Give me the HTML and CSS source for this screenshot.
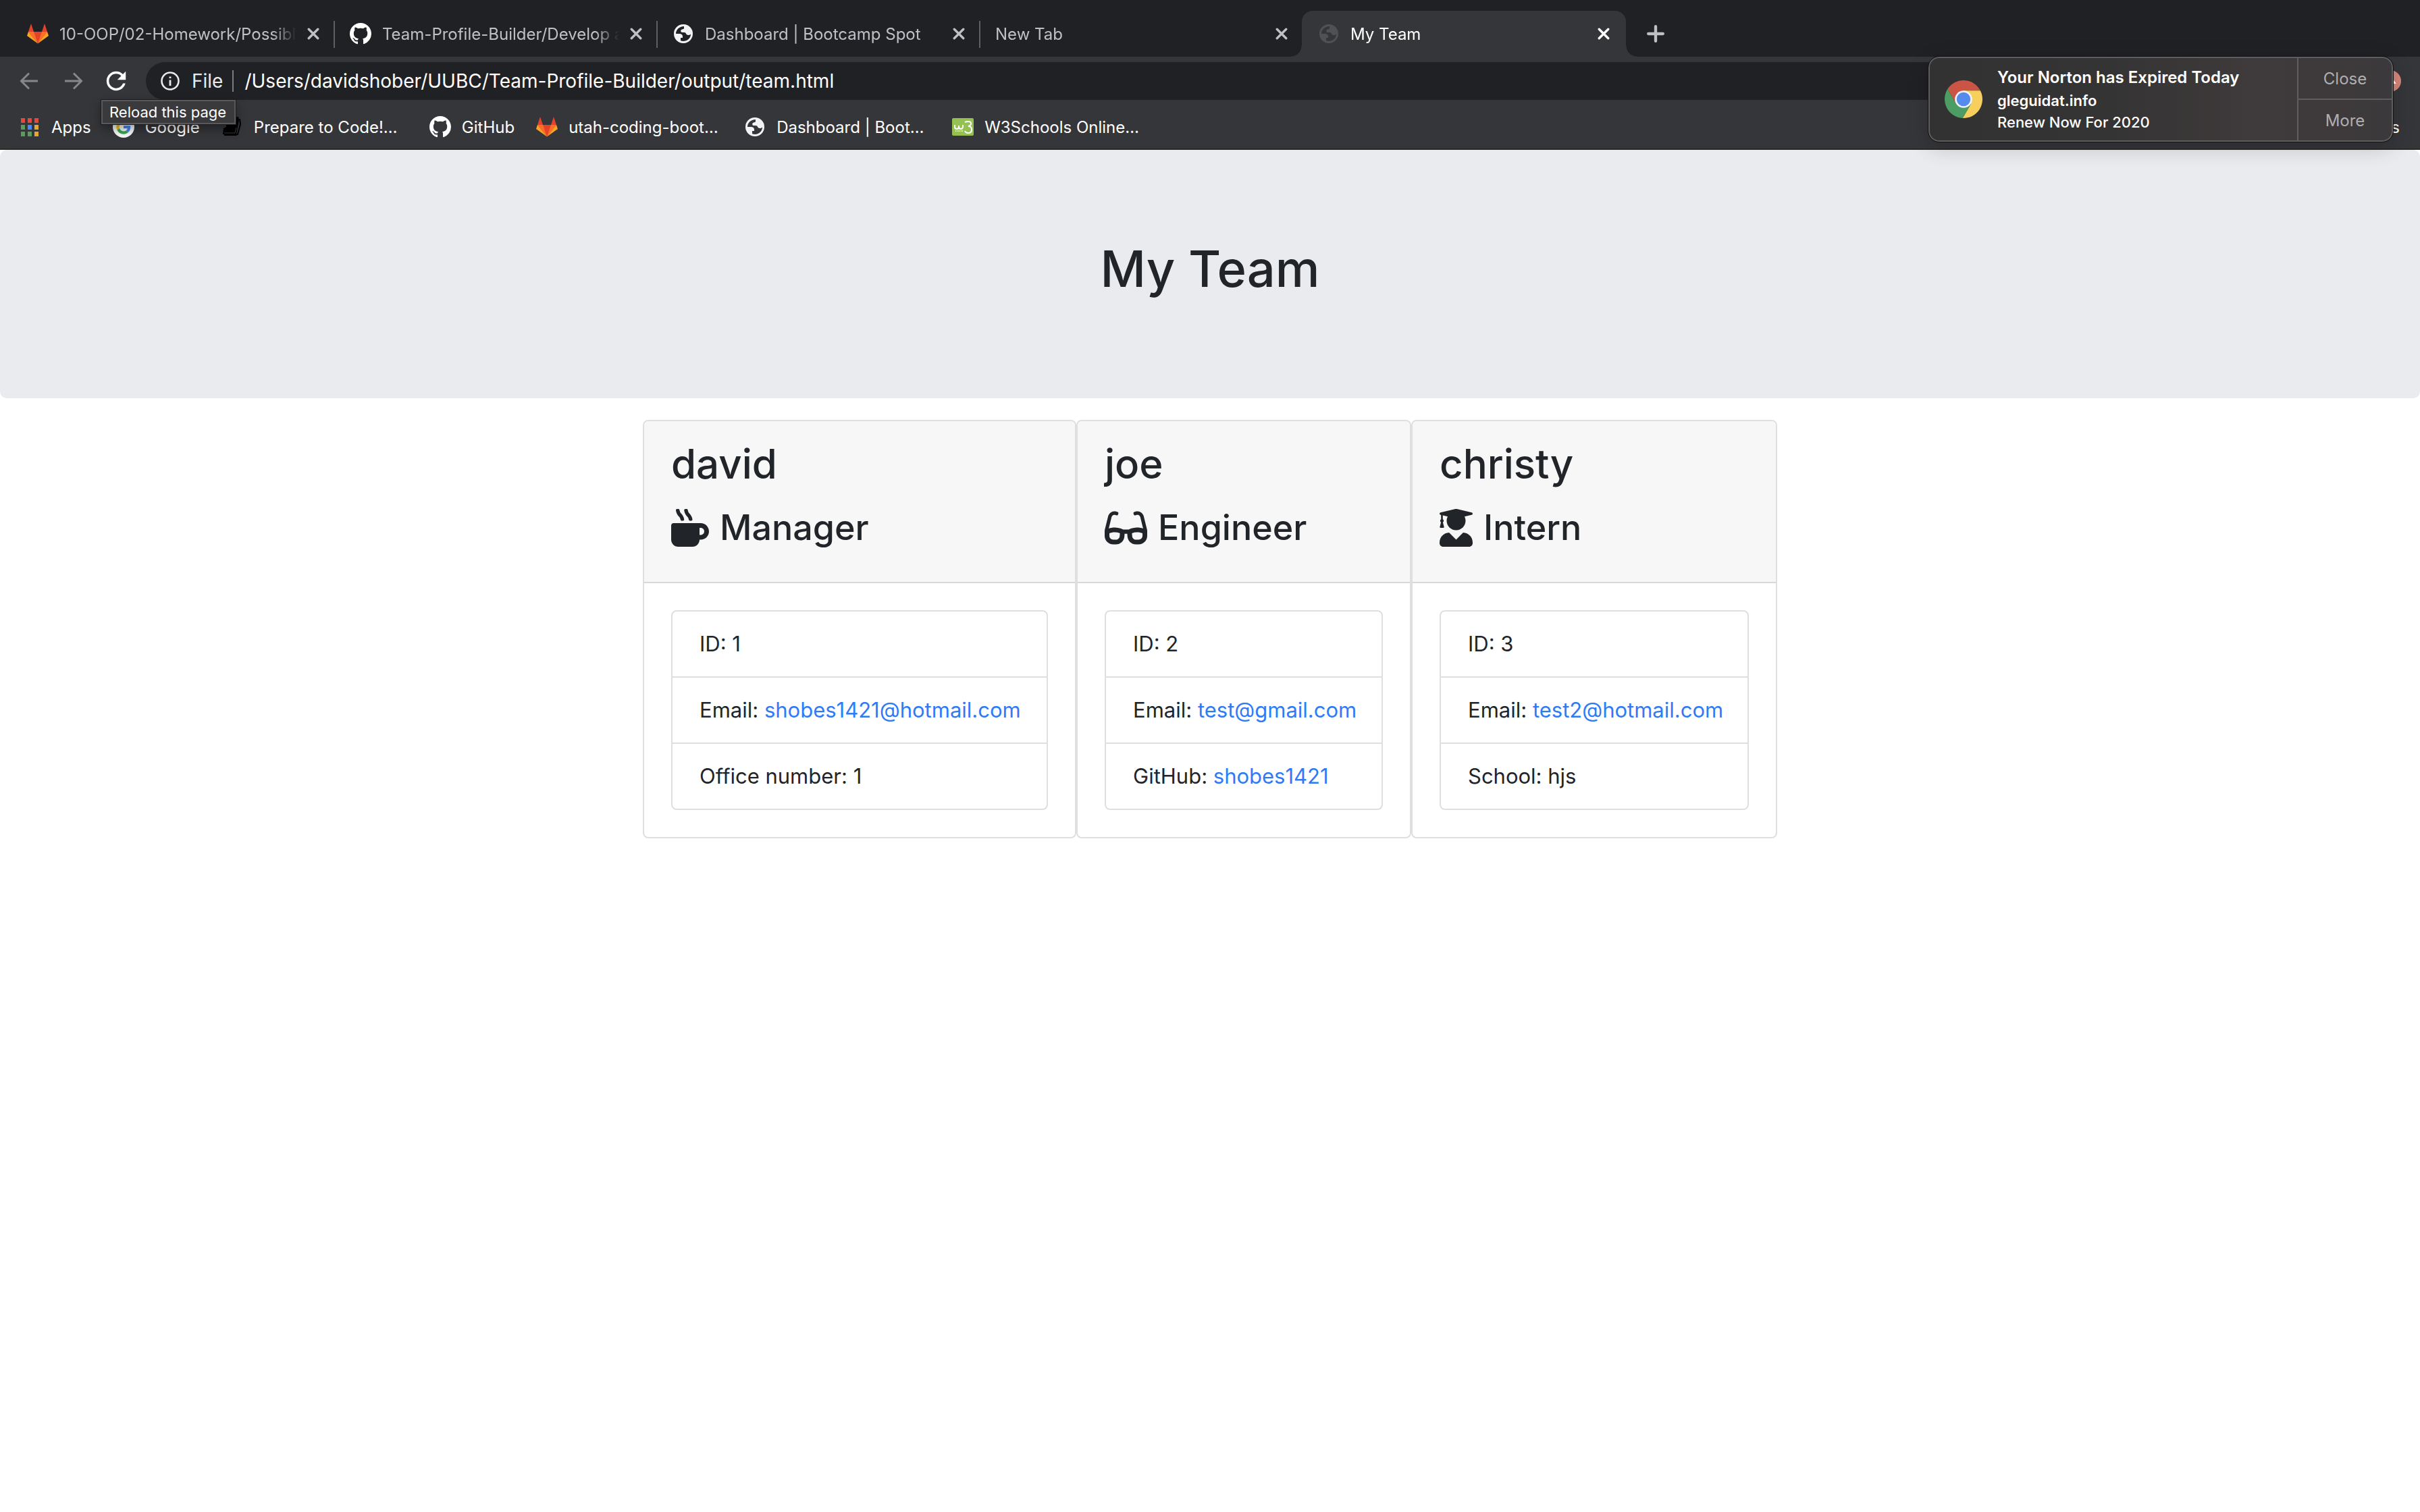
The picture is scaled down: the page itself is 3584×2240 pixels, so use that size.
FILE: index.html
```html
<!DOCTYPE html>
<html lang="en">
<head>
<meta charset="utf-8">
<title>My Team</title>
<link rel="stylesheet" href="styles.css">
</head>
<body>
<svg class="sprite" aria-hidden="true">
  <symbol id="gitlab" viewBox="0 0 32 32">
    <path fill="#e24329" d="M6 1 10 13H22L26 1 30 13 16 30.500 2 13Z"/>
    <path fill="#fc6d26" d="M2 13H10L16 30.500ZM30 13H22L16 30.500Z"/>
    <path fill="#fca326" d="M2 13 0 19 16 30.500ZM30 13 32 19 16 30.500Z"/>
  </symbol>
  <symbol id="github" viewBox="0 0 16 16">
    <path fill="#fff" d="M8 0C3.580 0 0 3.580 0 8c0 3.540 2.290 6.530 5.470 7.590.4.070.55-.17.55-.38 0-.19-.01-.82-.01-1.490-2.010.37-2.530-.49-2.690-.94-.09-.23-.48-.94-.82-1.130-.28-.15-.68-.52-.01-.53.630-.01 1.080.58 1.230.82.72 1.210 1.870.87 2.330.66.070-.52.28-.87.51-1.070-1.780-.2-3.640-.89-3.640-3.950 0-.87.31-1.590.82-2.150-.08-.2-.36-1.020.08-2.120 0 0 .67-.21 2.200.82.64-.18 1.320-.27 2-.27s1.360.09 2 .27c1.530-1.040 2.200-.82 2.200-.82.44 1.100.16 1.920.08 2.120.51.560.82 1.270.82 2.150 0 3.070-1.870 3.750-3.650 3.950.29.250.54.730.54 1.480 0 1.070-.01 1.930-.01 2.200 0 .21.15.46.55.38A8.010 8.010 0 0 0 16 8c0-4.420-3.580-8-8-8z"/>
  </symbol>
  <symbol id="globe" viewBox="-2 -2 32 32">
    <path fill="currentColor" fill-rule="evenodd" d="M14 0a14 14 0 1 0 0 28 14 14 0 0 0 0-28ZM15 3C8 3 3 8 3 14H8c3 0 5 1.500 5 4v2h-3v4.300C17 27 25 22 25 14.500c-3 2.500-6 1.500-7-.5-.5-2-2-2-5-2-3 0-3.500-2-2-4l4-1.500Z"/>
  </symbol>
  <symbol id="close" viewBox="0 0 16 16">
    <path d="M2 2 14 14M14 2 2 14" stroke="currentColor" stroke-width="3" stroke-linecap="round"/>
  </symbol>
</svg>

<header class="browser">
  <nav class="tabs" aria-label="Tabs">
    <div class="tab">
      <svg class="favicon"><use href="#gitlab"/></svg>
      <span class="tab-title">10-OOP/02-Homework/Possible</span>
      <button class="tab-close" aria-label="Close tab"><svg><use href="#close"/></svg></button>
    </div>
    <div class="tab">
      <svg class="favicon"><use href="#github"/></svg>
      <span class="tab-title">Team-Profile-Builder/Develop at</span>
      <button class="tab-close" aria-label="Close tab"><svg><use href="#close"/></svg></button>
    </div>
    <div class="tab">
      <svg class="favicon globe"><use href="#globe"/></svg>
      <span class="tab-title">Dashboard | Bootcamp Spot</span>
      <button class="tab-close" aria-label="Close tab"><svg><use href="#close"/></svg></button>
    </div>
    <div class="tab last">
      <span class="tab-title">New Tab</span>
      <button class="tab-close" aria-label="Close tab"><svg><use href="#close"/></svg></button>
    </div>
    <div class="tab active">
      <svg class="favicon globe dim"><use href="#globe"/></svg>
      <span class="tab-title">My Team</span>
      <button class="tab-close" aria-label="Close tab"><svg><use href="#close"/></svg></button>
    </div>
    <button class="new-tab" aria-label="New tab">
      <svg viewBox="0 0 24 24"><path d="M12 2V22M2 12H22" stroke="currentColor" stroke-width="4" stroke-linecap="round"/></svg>
    </button>
  </nav>

  <div class="toolbar">
    <button class="tool off" aria-label="Back"><svg viewBox="0 0 32 32"><path d="M28 16H4M15 4.500 3.500 16 15 27.500" fill="none" stroke="currentColor" stroke-width="3"/></svg></button>
    <button class="tool off" aria-label="Forward"><svg viewBox="0 0 32 32"><path d="M4 16H28M17 4.500 28.500 16 17 27.500" fill="none" stroke="currentColor" stroke-width="3"/></svg></button>
    <div class="reload">
      <button class="tool" aria-label="Reload"><svg viewBox="3 3 18 18"><path fill="currentColor" d="M17.650 6.350C16.200 4.900 14.210 4 12 4c-4.420 0-7.990 3.580-7.990 8s3.570 8 7.990 8c3.730 0 6.840-2.550 7.730-6h-2.080c-.82 2.330-3.040 4-5.650 4-3.310 0-6-2.690-6-6s2.690-6 6-6c1.660 0 3.140.69 4.220 1.780L13 11h7V4l-2.350 2.350z"/></svg></button>
      <span class="tooltip" role="tooltip">Reload this page</span>
    </div>
    <div class="omnibox">
      <svg class="info" viewBox="0 0 28 28"><circle cx="14" cy="14" r="12.500" fill="none" stroke="currentColor" stroke-width="2.600"/><path d="M14 12.500V21M14 7.500V10" stroke="currentColor" stroke-width="2.800"/></svg>
      <label class="scheme" for="url">File</label>
      <input class="url" id="url" type="text" value="/Users/davidshober/UUBC/Team-Profile-Builder/output/team.html">
    </div>
    <button class="avatar" aria-label="Profile"><svg viewBox="0 0 32 32"><path d="M16 8 25 20H7Z" fill="#fff"/></svg></button>
  </div>

  <nav class="bookmarks" aria-label="Bookmarks">
    <a class="bookmark" href="#">
      <svg class="favicon" viewBox="0 0 32 32"><path fill="#e5493d" d="M3 3h6v7H3zM13 3h6v7h-6zM23 3h6v7h-6z"/><path fill="#579e5b" d="M3 13h6v7H3zM3 23h6v7H3zM13 23h6v7h-6z"/><path fill="#4a8af4" d="M13 13h6v7h-6z"/><path fill="#e9a532" d="M23 13h6v7h-6zM23 23h6v7h-6z"/></svg>
      <span>Apps</span>
    </a>
    <a class="bookmark" href="#">
      <svg class="favicon" viewBox="0 0 72 72"><circle cx="36" cy="36" r="36" fill="#f8f8f8"/><g transform="translate(12 12)"><path fill="#ea4335" d="M24 9.500c3.540 0 6.710 1.220 9.210 3.600l6.850-6.850C35.900 2.380 30.470 0 24 0 14.620 0 6.510 5.380 2.560 13.220l7.980 6.190C12.430 13.720 17.740 9.500 24 9.500z"/><path fill="#4285f4" d="M46.980 24.550c0-1.570-.15-3.090-.38-4.550H24v9.020h12.940c-.58 2.960-2.260 5.480-4.780 7.180l7.730 6c4.510-4.180 7.090-10.360 7.090-17.650z"/><path fill="#fbbc05" d="M10.530 28.590c-.48-1.450-.76-2.990-.76-4.590s.27-3.140.76-4.590l-7.980-6.190C.92 16.460 0 20.120 0 24c0 3.880.92 7.540 2.560 10.780l7.970-6.190z"/><path fill="#34a853" d="M24 48c6.480 0 11.930-2.130 15.890-5.810l-7.730-6c-2.150 1.450-4.920 2.300-8.160 2.300-6.260 0-11.570-4.220-13.470-9.910l-7.980 6.190C6.510 42.620 14.620 48 24 48z"/></g></svg>
      <span>Google</span>
    </a>
    <a class="bookmark wide" href="#">
      <svg class="favicon" viewBox="0 0 32 32"><path d="M7 3 25 1 26 6 22 27H2L3 18 7 16Z"/><path d="M27 4 28 12 24 27 21 28H4" fill="none" stroke="#000" stroke-width="2"/><path d="M4 25H20L22 17" fill="none" stroke="#3a3b3e"/></svg>
      <span>Prepare to Code!…</span>
    </a>
    <a class="bookmark" href="#">
      <svg class="favicon"><use href="#github"/></svg>
      <span>GitHub</span>
    </a>
    <a class="bookmark wide" href="#">
      <svg class="favicon"><use href="#gitlab"/></svg>
      <span>utah-coding-boot…</span>
    </a>
    <a class="bookmark wide" href="#">
      <svg class="favicon globe"><use href="#globe"/></svg>
      <span>Dashboard | Boot…</span>
    </a>
    <a class="bookmark wide" href="#">
      <svg class="favicon" viewBox="0 0 32 32"><rect y="3" width="32" height="26" rx="2" fill="#95c152"/><path d="M4 13v3q0 3 3 3t3-3v-2 2q0 3 3 3t3-4v-2M19 9q2-1 5-1 4 0 4 3t-4 4q5 0 5 5t-5 5q-4 0-5-3" fill="none" stroke="#fff" stroke-width="2"/><path d="M5 22H17" stroke="#fff" stroke-width="2" stroke-dasharray="1 1"/></svg>
      <span>W3Schools Online…</span>
    </a>
    <a class="bookmark other" href="#" aria-label="Other Bookmarks"><span>s</span></a>
  </nav>

  <aside class="notice" aria-label="Notification">
    <svg class="chrome" viewBox="0 0 48 48"><path fill="#cc5444" d="M45.330 13H24V24L14.470 29.500 3.800 11.030A24 24 0 0 1 45.330 13"/><path fill="#f7cf5d" d="M45.330 13H24V24L33.530 29.500 22.870 47.970A24 24 0 0 0 45.330 13"/><path fill="#4c9d63" d="M3.800 11.030 14.470 29.500 24 24 33.530 29.500 22.870 47.970A24 24 0 0 1 3.800 11.030"/><circle cx="24" cy="24" r="11" fill="#f2f3f7"/><circle cx="24" cy="24" r="8.800" fill="#568bee"/></svg>
    <div class="notice-text">
      <strong>Your Norton has Expired Today</strong>
      <b>gleguidat.info</b>
      <span>Renew Now For 2020</span>
    </div>
    <div class="notice-actions">
      <button>Close</button>
      <button>More</button>
    </div>
  </aside>
</header>

<main class="page">
  <div class="jumbotron"><h1>My Team</h1></div>

  <div class="team">
    <section class="card">
      <div class="card-header">
        <h2>david</h2>
        <h3><svg viewBox="0 0 512 512"><path fill="currentColor" d="M127.100 146.500c1.300 7.700 8 13.500 16 13.500h16.500c9.800 0 17.600-8.500 16.300-18-3.800-28.200-16.400-54.200-36.600-74.700-14.400-14.700-23.600-33.300-26.400-53.500C111.800 5.900 105 0 96.800 0H80.400C70.600 0 63 8.500 64.100 18c3.900 31.900 18 61.300 40.600 84.400 12 12.200 19.700 27.500 22.400 44.100zm112 0c1.300 7.700 8 13.500 16 13.500h16.500c9.800 0 17.600-8.500 16.300-18-3.800-28.200-16.400-54.200-36.600-74.700-14.400-14.700-23.600-33.300-26.400-53.500C223.800 5.900 217 0 208.800 0h-16.400c-9.800 0-17.500 8.500-16.300 18 3.900 31.900 18 61.300 40.600 84.400 12 12.200 19.700 27.500 22.400 44.100zM400 192H32c-17.700 0-32 14.300-32 32v192c0 53 43 96 96 96h192c53 0 96-43 96-96h16c61.800 0 112-50.200 112-112s-50.200-112-112-112zm0 160h-16v-96h16c26.500 0 48 21.500 48 48s-21.500 48-48 48z"/></svg>Manager</h3>
      </div>
      <ul class="details">
        <li>ID: 1</li>
        <li>Email: <a href="mailto:shobes1421@hotmail.com">shobes1421@hotmail.com</a></li>
        <li>Office number: 1</li>
      </ul>
    </section>
    <section class="card">
      <div class="card-header">
        <h2>joe</h2>
        <h3><svg viewBox="0 0 576 512"><path fill="currentColor" d="M574.100 280.370L528.750 98.660c-5.910-23.700-21.590-44.050-43-55.810-21.440-11.730-46.970-14.110-70.190-6.330l-15.250 5.080c-8.390 2.790-12.920 11.860-10.120 20.240l5.060 15.180c2.790 8.380 11.850 12.910 20.230 10.120l13.180-4.390c10.870-3.620 23-3.570 33.160 1.730 10.290 5.370 17.570 14.560 20.370 25.820l38.460 153.820c-22.190-6.810-49.790-12.460-81.200-12.460-34.770 0-73.980 7.020-114.850 26.740h-73.180c-40.870-19.740-80.080-26.750-114.860-26.750-31.420 0-59.020 5.650-81.210 12.460l38.460-153.830c2.790-11.250 10.090-20.450 20.380-25.810 10.160-5.300 22.280-5.350 33.150-1.730l13.170 4.390c8.380 2.790 17.440-1.740 20.230-10.120l5.060-15.180c2.800-8.380-1.730-17.450-10.120-20.240l-15.250-5.080c-23.220-7.780-48.750-5.410-70.190 6.330-21.410 11.770-37.090 32.110-43 55.800L1.900 280.370A64.218 64.218 0 0 0 0 295.860v70.250C0 429.010 51.580 480 115.200 480h37.120c60.280 0 110.370-45.940 114.880-105.370l2.930-38.630h35.750l2.930 38.630C313.310 434.060 363.400 480 423.680 480h37.120c63.620 0 115.200-50.990 115.200-113.880v-70.250c0-5.230-.64-10.430-1.900-15.500zm-370.720 89.420c-1.970 25.910-24.400 46.210-51.060 46.210H115.200C86.970 416 64 393.620 64 366.110v-37.540c18.120-6.490 43.420-12.920 72.580-12.920 23.860 0 47.260 4.330 69.930 12.920l-3.130 41.220zM512 366.120c0 27.510-22.970 49.880-51.200 49.880h-37.120c-26.670 0-49.100-20.300-51.060-46.210l-3.130-41.220c22.670-8.590 46.080-12.920 69.950-12.920 29.120 0 54.430 6.440 72.550 12.930v37.540z"/></svg>Engineer</h3>
      </div>
      <ul class="details">
        <li>ID: 2</li>
        <li>Email: <a href="mailto:test@gmail.com">test@gmail.com</a></li>
        <li>GitHub: <a href="https://github.com/shobes1421">shobes1421</a></li>
      </ul>
    </section>
    <section class="card">
      <div class="card-header">
        <h2>christy</h2>
        <h3><svg viewBox="0 0 448 512"><path fill="currentColor" d="M319.400 320.600L224 416l-95.400-95.400C57.100 323.700 0 382.200 0 454.400v9.600c0 26.500 21.500 48 48 48h352c26.500 0 48-21.500 48-48v-9.600c0-72.200-57.100-130.700-128.600-133.800zM13.600 79.800l6.400 1.500v58.400c-7 4.200-12 11.500-12 20.300 0 8.400 4.600 15.400 11.100 19.700L3.500 242c-1.700 6.900 2.100 14 7.600 14h41.800c5.500 0 9.300-7.100 7.600-14l-15.600-62.300C51.400 175.400 56 168.400 56 160c0-8.800-5-16.100-12-20.300V87.100l66 15.900c-8.600 17.200-14 36.400-14 57 0 70.700 57.300 128 128 128s128-57.300 128-128c0-20.600-5.300-39.800-14-57l96.300-23.200c18.200-4.400 18.200-27.100 0-31.500l-190.400-46c-13-3.100-26.700-3.100-39.700 0L13.600 48.200c-18.100 4.400-18.100 27.200 0 31.600z"/></svg>Intern</h3>
      </div>
      <ul class="details">
        <li>ID: 3</li>
        <li>Email: <a href="mailto:test2@hotmail.com">test2@hotmail.com</a></li>
        <li>School: hjs</li>
      </ul>
    </section>
  </div>
</main>
</body>
</html>
```
FILE: styles.css
```css
* {
  box-sizing: border-box;
}

body {
  margin: 0;
  background: #fff;
  color: #212529;
  font-family: Inter, "Liberation Sans", sans-serif;
  font-size: 31px;
}

button {
  padding: 0;
  border: 0;
  background: none;
  color: inherit;
  font: inherit;
}

svg {
  display: block;
}

a {
  text-decoration: none;
}

.sprite {
  position: absolute;
  width: 0;
  height: 0;
}

/* Browser window */
.browser {
  position: relative;
  border-bottom: 2px solid #2a2926;
  background: #35363a;
  color: #fff;
  font-size: 24px;
}

/* Tab strip */
.tabs {
  display: flex;
  height: 84px;
  padding: 16px 16px 0;
  background: #202125;
  color: #bdc1c6;
}

.tab {
  position: relative;
  display: flex;
  flex: 0 1 478px;
  align-items: center;
  gap: 16px;
  min-width: 0;
  padding: 0 21px 0 24px;
}

.tab:not(.last, .active)::after {
  content: "";
  position: absolute;
  right: -2px;
  top: 15px;
  width: 2px;
  height: 40px;
  background: #5f6063;
}

.tab.active {
  flex-basis: 480px;
  padding-right: 24px;
  border-radius: 16px 16px 0 0;
  background: #35363a;
  color: #fff;
}

.tab.active::before,
.tab.active::after {
  content: "";
  position: absolute;
  bottom: 0;
  width: 16px;
  height: 16px;
}

.tab.active::before {
  right: 100%;
  background: radial-gradient(circle at 0 0, #202125 15px, #35363a 16px);
}

.tab.active::after {
  left: 100%;
  background: radial-gradient(circle at 100% 0, #202125 15px, #35363a 16px);
}

.favicon {
  flex: none;
  width: 32px;
  height: 32px;
}

.globe {
  color: #f1f3f4;
}

.globe.dim {
  color: #505155;
}

.tab-title {
  flex: 1;
  overflow: hidden;
  white-space: nowrap;
  mask-image: linear-gradient(to left, transparent, #000 36px);
}

.tab-close svg {
  width: 18px;
  height: 18px;
}

.new-tab {
  padding: 0 31px;
}

.new-tab svg {
  width: 26px;
  height: 26px;
}

/* Toolbar */
.toolbar {
  display: flex;
  align-items: center;
  gap: 32px;
  height: 72px;
  padding: 0 28px;
}

.tool {
  display: block;
}

.tool svg {
  width: 32px;
  height: 32px;
}

.tool.off {
  color: #86878a;
}

.reload {
  position: relative;
}

.tooltip {
  position: absolute;
  z-index: 1;
  top: 44px;
  left: -6px;
  padding: 0 12px 0 10px;
  border: 2px solid #59585a;
  outline: 1px solid #1c1c1e;
  background: #3a393b;
  box-shadow: 0 6px 16px rgba(0, 0, 0, .4);
  font-size: 22px;
  line-height: 32px;
  white-space: nowrap;
}

.omnibox {
  display: flex;
  flex: 1;
  align-items: center;
  height: 56px;
  margin-left: -4px;
  padding: 0 22px;
  border-radius: 28px;
  background: #202125;
  color: #e8eaed;
  font-size: 28px;
}

.info {
  width: 28px;
  height: 28px;
}

.scheme {
  margin-left: 18px;
  padding-right: 14px;
  border-right: 2px solid #7b7c7f;
  line-height: 32px;
}

.url {
  flex: 1;
  min-width: 0;
  padding: 0 0 0 16px;
  border: 0;
  background: none;
  color: #fff;
  font: inherit;
}

.avatar svg {
  width: 32px;
  height: 32px;
  border-radius: 50%;
  background: #d7867a;
}

/* Bookmarks bar */
.bookmarks {
  display: flex;
  align-items: center;
  gap: 32px;
  height: 64px;
  padding: 0 30px 0 28px;
}

.bookmark {
  display: flex;
  align-items: center;
  gap: 16px;
  color: #fff;
  white-space: nowrap;
}

.bookmark.wide {
  flex: 0 1 276px;
}

.bookmark.other {
  margin-left: auto;
}

/* Desktop notification lying over the window */
.notice {
  position: absolute;
  z-index: 2;
  top: 84px;
  right: 40px;
  display: flex;
  align-items: center;
  width: 688px;
  height: 126px;
  border: 2px solid #5f5d5e;
  outline: 1px solid #111;
  border-radius: 16px;
  background: linear-gradient(to right, #323233, #353434 40%, #3f3a3b 70%, #3c393c);
  box-shadow: 0 8px 32px rgba(0, 0, 0, .2);
  font-size: 22px;
}

.chrome {
  width: 56px;
  height: 56px;
  margin: 0 22px;
}

.notice-text {
  display: flex;
  flex: 1;
  flex-direction: column;
  font-weight: 500;
  line-height: 32px;
}

.notice-text strong {
  font-size: 24px;
  font-weight: 600;
  line-height: 36px;
}

.notice-text b {
  font-weight: 600;
}

.notice-actions {
  display: flex;
  flex-direction: column;
  align-self: stretch;
  width: 140px;
  border-left: 2px solid #5f5d5e;
  color: #b0aeb0;
  font-size: 24px;
}

.notice-actions button {
  flex: 1;
}

.notice-actions button + button {
  border-top: 2px solid #5f5d5e;
}

/* Page */
.jumbotron {
  padding: 128px 64px;
  border-radius: 10px;
  background: #eaebef;
  text-align: center;
}

h1,
h2,
h3 {
  margin: 0 0 16px;
  font-weight: 500;
}

h1 {
  font-size: 74px;
  line-height: 96px;
}

h2 {
  font-size: 60px;
  line-height: 78px;
}

h3 {
  display: flex;
  align-items: center;
  gap: 16px;
  font-size: 52px;
  line-height: 80px;
}

h3 svg {
  height: 56px;
}

.team {
  display: grid;
  grid-template-columns: 642fr 496fr 542fr;
  max-width: 1680px;
  margin: 32px auto;
}

.card {
  border: 2px solid #dfdfdf;
  border-radius: 8px;
}

.card-header {
  padding: 24px 40px;
  border-bottom: 2px solid #d8d8d8;
  border-radius: 6px 6px 0 0;
  background: #f7f7f7;
}

.details {
  margin: 40px;
  padding: 0;
  border: 2px solid #dfdfdf;
  border-radius: 8px;
  list-style: none;
  line-height: 48px;
  white-space: nowrap;
}

.details li {
  padding: 24px 24px 24px 40px;
}

.details li + li {
  border-top: 2px solid #dfdfdf;
}

.details a {
  color: #2f7bf6;
}
```
